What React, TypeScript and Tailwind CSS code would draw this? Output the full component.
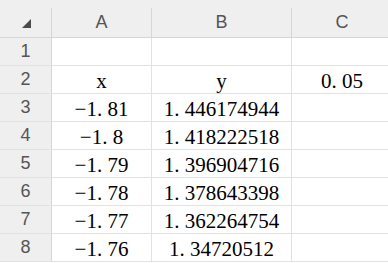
import React from "react";

const rows: [string, string, string][] = [
  ["", "", ""],
  ["x", "y", "0.05"],
  ["-1.81", "1.446174944", ""],
  ["-1.8", "1.418222518", ""],
  ["-1.79", "1.396904716", ""],
  ["-1.78", "1.378643398", ""],
  ["-1.77", "1.362264754", ""],
  ["-1.76", "1.34720512", ""],
];

// mimic SimSun style half-width period and long minus
const Num: React.FC<{ v: string }> = ({ v }) => {
  const txt = v.replace("-", "\u2212");
  const parts = txt.split(".");
  if (parts.length < 2) return <>{txt}</>;
  return (
    <>
      {parts[0]}
      <span className="inline-block w-[0.5em]">.</span>
      {parts[1]}
    </>
  );
};

const cols = ["w-[100px]", "w-[140px]", "w-[101px]"];

const App: React.FC = () => {
  return (
    <div className="w-[388px] h-[263px] overflow-hidden bg-white">
      {/* column header */}
      <div className="flex w-[400px] bg-[#efefef] pt-2 h-[38px] border-b border-[#d6d6d6] font-['Liberation_Sans',sans-serif] text-[18px] text-[#555]">
        <div className="w-[52px] shrink-0 border-r border-[#d6d6d6] flex items-center justify-center">
          <svg width="9" height="9" viewBox="0 0 9 9" className="ml-[2px] mt-[2px]">
            <polygon points="9,0 9,9 0,9" fill="#4a4a4a" />
          </svg>
        </div>
        {["A", "B", "C"].map((c, i) => (
          <div
            key={c}
            className={`${cols[i]} shrink-0 border-r border-[#d6d6d6] flex items-center justify-center`}
          >
            {c}
          </div>
        ))}
      </div>

      {rows.map((r, ri) => (
        <div key={ri} className="flex w-[400px] h-[28px] border-b border-[#e1e1e1]">
          <div className="w-[52px] shrink-0 bg-[#efefef] border-r border-[#d6d6d6] flex items-center justify-center font-['Liberation_Sans',sans-serif] text-[18px] text-[#555]">
            {ri + 1}
          </div>
          {r.map((v, ci) => (
            <div
              key={ci}
              className={`${cols[ci]} shrink-0 border-r border-[#e1e1e1] flex items-end justify-center pb-[1px] font-['Liberation_Serif',serif] text-[21px] leading-none text-black`}
            >
              <Num v={v} />
            </div>
          ))}
        </div>
      ))}
    </div>
  );
};

export default App;
